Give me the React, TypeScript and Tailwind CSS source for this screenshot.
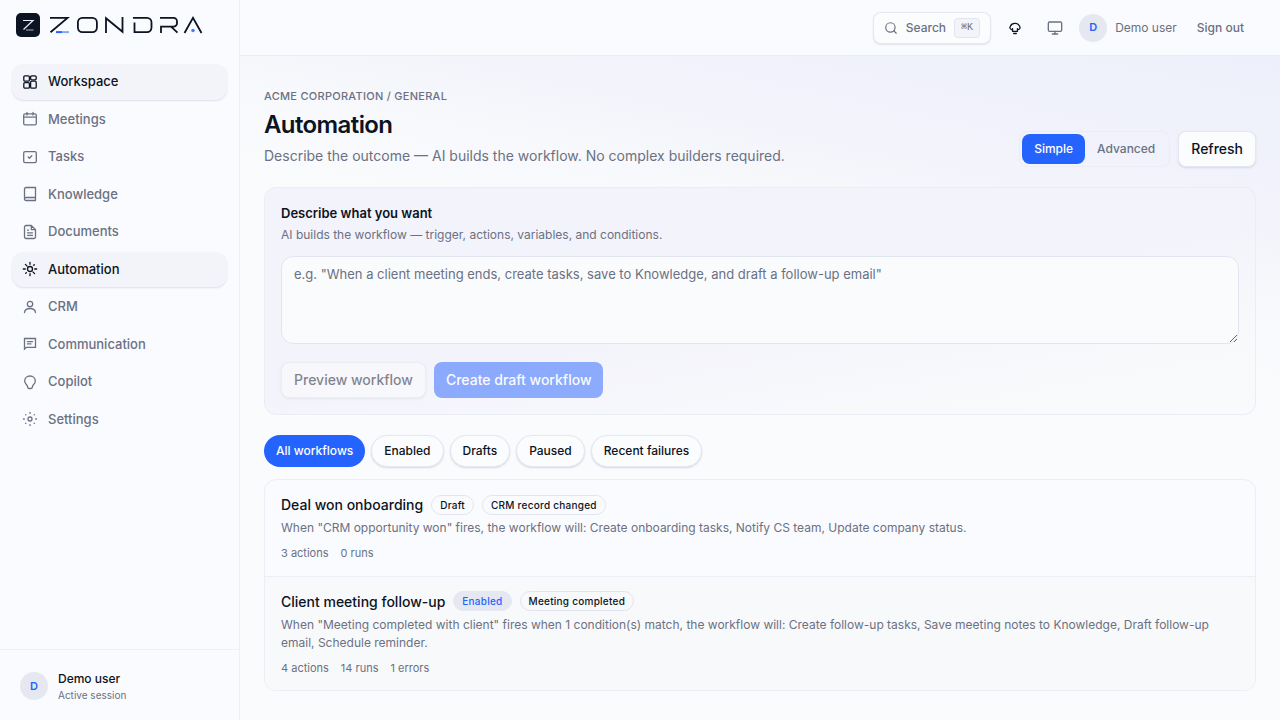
import React from "react";
import { Search, Monitor } from "lucide-react";

type IconProps = { children: React.ReactNode; className?: string };

function Glyph({ children, className = "size-4" }: IconProps) {
  return (
    <svg
      viewBox="0 0 16 16"
      fill="none"
      stroke="currentColor"
      strokeWidth="1.3"
      strokeLinecap="round"
      strokeLinejoin="round"
      className={`shrink-0 ${className}`}
      aria-hidden="true"
    >
      {children}
    </svg>
  );
}

const navItems = [
  {
    label: "Workspace",
    active: true,
    icon: (
      <>
        <rect x="1.8" y="1.8" width="5.6" height="5.4" rx="1.2" />
        <rect x="8.6" y="1.8" width="5.6" height="4" rx="1.2" />
        <rect x="1.8" y="8.6" width="5.6" height="5.6" rx="1.2" />
        <rect x="8.6" y="7.2" width="5.6" height="7" rx="1.2" />
      </>
    ),
  },
  {
    label: "Meetings",
    icon: (
      <>
        <rect x="1.7" y="2.8" width="12.6" height="11" rx="1.4" />
        <path d="M1.7 6.2h12.6M5 1.5v2.6M11 1.5v2.6" />
      </>
    ),
  },
  {
    label: "Tasks",
    icon: (
      <>
        <rect x="1.7" y="2.6" width="12.6" height="11" rx="1.4" />
        <path d="m6.2 8 1.2 1.2 2.4-2.4" />
      </>
    ),
  },
  {
    label: "Knowledge",
    icon: (
      <path d="M2.5 13V3c0-.9.6-1.5 1.5-1.5h9.5v13H4c-.9 0-1.5-.6-1.5-1.5s.6-1.5 1.5-1.5h9.5" />
    ),
  },
  {
    label: "Documents",
    icon: (
      <path d="M9.3 1.5H4c-.8 0-1.5.6-1.5 1.4v10.2c0 .8.7 1.4 1.5 1.4h8c.8 0 1.5-.6 1.5-1.4V5.6zM9.3 1.5v4.1h4.2M5.5 6.2h1M5.5 8.8h5M5.5 11.3h5" />
    ),
  },
  {
    label: "Automation",
    active: true,
    icon: (
      <>
        <circle cx="8" cy="8" r="2.5" />
        <path d="M8 1.3v2M8 12.7v2M1.3 8h2M12.7 8h2M3.4 3.4l1.7 1.7M10.9 10.9l1.7 1.7M12.3 3.7l-.6.6M4.3 11.7l-.6.6" />
      </>
    ),
  },
  {
    label: "CRM",
    icon: (
      <>
        <circle cx="8" cy="5" r="2.7" />
        <path d="M2.5 13.5c.3-2.6 2.5-4 5.500-4s5.200 1.400 5.500 4" />
      </>
    ),
  },
  {
    label: "Communication",
    icon: (
      <path strokeLinejoin="miter" d="M2.5 2.5h11v8.800h-9l-2 1.800zM5.500 5.600h5M5.500 7.900H9" />
    ),
  },
  {
    label: "Copilot",
    icon: (
      <path d="M8 2C5 2 2.7 4.100 2.700 7c0 1.800 1 3 2 4 .6.6.800 1 .8 1.600 0 1.100.6 1.900 1.500 1.900h2c.9 0 1.500-.8 1.500-1.900 0-.6.2-1 .8-1.600 1-1 2-2.200 2-4 0-2.900-2.300-5-5.300-5z" />
    ),
  },
  {
    label: "Settings",
    icon: (
      <>
        <circle cx="8" cy="8" r="2" />
        <path d="M8 1.5v.8M8 13.7v.8M1.5 8h.8M13.7 8h.8M3.6 3.6l.3.3M12.1 12.1l.3.3M12.4 3.6l-.3.3M3.9 12.1l-.3.3" />
      </>
    ),
  },
];

const filters = ["Enabled", "Drafts", "Paused", "Recent failures"];

const workflows = [
  {
    name: "Deal won onboarding",
    status: "Draft",
    trigger: "CRM record changed",
    summary:
      'When "CRM opportunity won" fires, the workflow will: Create onboarding tasks, Notify CS team, Update company status.',
    stats: ["3 actions", "0 runs"],
  },
  {
    name: "Client meeting follow-up",
    status: "Enabled",
    trigger: "Meeting completed",
    summary:
      'When "Meeting completed with client" fires when 1 condition(s) match, the workflow will: Create follow-up tasks, Save meeting notes to Knowledge, Draft follow-up email, Schedule reminder.',
    stats: ["4 actions", "14 runs", "1 errors"],
  },
];

function Logo() {
  return (
    <a href="#" aria-label="Zondra" className="flex items-center gap-2">
      <svg viewBox="0 0 24 24" className="size-6" aria-hidden="true">
        <rect width="24" height="24" rx="5" fill="#0c1322" />
        <path d="M7 7.5h10l-9.5 9" fill="none" stroke="#e8ebf5" strokeWidth="1.2" />
        <path d="M10 17h7.5" stroke="#8f98ad" strokeWidth="1.2" />
      </svg>
      <svg viewBox="0 0 156 24" className="h-6 w-[156px]" fill="none" aria-hidden="true">
        <g stroke="#0c1322" strokeWidth="1.8">
          <path d="M2 4.9h17.5l-17 14.4" />
          <rect x="29.9" y="4.9" width="19" height="14.2" rx="4.5" />
          <path d="M58 20V5.2l16.5 13.600V4" />
          <path d="M86.5 9.5v9.600H99a4.500 4.500 0 0 0 4.500-4.500V9.400A4.500 4.500 0 0 0 99 4.900H85" />
          <path d="M113 20v-6.300h12.500a3.500 3.500 0 0 0 3.500-3.500V8.400a3.500 3.500 0 0 0-3.500-3.500H112M123 13.700l6.500 6" />
          <path d="m136.500 20 8.500-15.200 8.500 15.200" />
        </g>
        <path d="M8 19.1h6" stroke="#2563ff" strokeWidth="2" />
        <path d="M14 19.1h7" stroke="#86a8fb" strokeWidth="2" />
        <circle cx="145" cy="17.5" r="1.8" fill="#4b7dfb" />
      </svg>
    </a>
  );
}

function Avatar() {
  return (
    <span className="flex size-7 shrink-0 items-center justify-center rounded-full bg-[#e5e8f1] text-[11px] font-semibold text-[#2563ff]">
      D
    </span>
  );
}

function Sidebar() {
  return (
    <aside className="flex w-60 shrink-0 flex-col border-r border-[#eef0f6] bg-[#fafbfe]">
      <div className="px-4 pt-[13px]">
        <Logo />
      </div>
      <nav className="mt-[27px] flex flex-1 flex-col gap-0.5 px-3">
        {navItems.map((item) => (
          <a
            key={item.label}
            href="#"
            className={`flex items-center gap-2.5 rounded-xl px-2.5 py-2 text-[13px] leading-normal font-medium ${
              item.active
                ? "bg-[#f3f4f9] text-[#0c1322] shadow-[0_1px_2px_#dcdfeb]"
                : "text-[#6b7182]"
            }`}
          >
            <Glyph>{item.icon}</Glyph>
            {item.label}
          </a>
        ))}
      </nav>
      <div className="flex items-center gap-2.5 border-t border-[#eef0f6] px-5 pt-5 pb-[18px]">
        <Avatar />
        <div>
          <p className="text-xs leading-[18px] font-medium text-[#0c1322]">Demo user</p>
          <p className="text-[10px] leading-[14px] text-[#6b7182]">Active session</p>
        </div>
      </div>
    </aside>
  );
}

function Topbar() {
  return (
    <header className="flex h-14 items-center justify-end gap-2 border-b border-[#eaecf5] bg-[#fafbfe] px-6">
      <button className="flex h-8 items-center gap-2 rounded-lg border border-[#e5e8f1] bg-[#fbfcfe] px-2.5 text-xs font-medium text-[#6b7182] shadow-[0_1px_2px_#dfe2ee]">
        <Search className="size-3.5" />
        Search
        <kbd className="flex h-5 items-center rounded-sm border border-[#e2e5ef] bg-[#f2f4f9] px-1.5 font-['Liberation_Mono',monospace] text-[10px]">
          ⌘K
        </kbd>
      </button>
      <button aria-label="Tips" className="flex size-8 items-center justify-center text-[#0c1322]">
        <Glyph className="size-3.5">
          <path
            strokeWidth="1.5"
            d="M5 10 3.500 9.500A2.600 2.600 0 0 1 2.700 6 5.500 5.500 0 0 1 8 2.700 5.500 5.500 0 0 1 13.300 6a2.600 2.600 0 0 1-.8 3.500L11 10M5.200 8.800v3h5.600v-3M6.500 14.300h3"
          />
        </Glyph>
      </button>
      <button
        aria-label="Display"
        className="flex size-8 items-center justify-center text-[#6b7182]"
      >
        <Monitor className="size-4" />
      </button>
      <Avatar />
      <span className="text-xs text-[#6b7182]">Demo user</span>
      <button className="h-8 px-3 text-xs font-medium text-[#6b7182]">Sign out</button>
    </header>
  );
}

function PageHeader() {
  return (
    <div className="flex items-end justify-between gap-4">
      <div>
        <p className="text-[11px] leading-[17px] font-medium tracking-wide text-[#6b7182] uppercase">
          Acme Corporation / General
        </p>
        <h1 className="mt-1 text-2xl leading-8 font-semibold tracking-tight text-[#0c1322]">
          Automation
        </h1>
        <p className="mt-1 text-sm leading-[22px] text-[#6b7182]">
          Describe the outcome — AI builds the workflow. No complex builders required.
        </p>
      </div>
      <div className="flex gap-2">
        <div className="flex rounded-lg border border-[#ebedf5] p-0.5 text-xs">
          <button className="rounded-lg bg-[#2563ff] px-3 font-medium text-white">Simple</button>
          <button className="px-3 font-medium text-[#6b7182]">Advanced</button>
        </div>
        <button className="h-9 rounded-lg border border-[#e5e8f1] bg-[#fbfcfe] px-3 text-sm font-medium text-[#0c1322] shadow-[0_1px_2px_#d5d8e3]">
          Refresh
        </button>
      </div>
    </div>
  );
}

function PromptCard() {
  return (
    <section className="mt-5 rounded-xl border border-[#ebedf5] bg-[linear-gradient(170deg,#f2f3fb_0%,#f3f3fb_50%,#f8f9fb_80%,#f9fafc_100%)] p-4">
      <label
        htmlFor="prompt"
        className="block text-[13px] leading-[18px] font-semibold text-[#0c1322]"
      >
        Describe what you want
      </label>
      <p className="mt-1 text-xs leading-[18px] text-[#6b7182]">
        AI builds the workflow — trigger, actions, variables, and conditions.
      </p>
      <textarea
        id="prompt"
        placeholder={
          'e.g. "When a client meeting ends, create tasks, save to Knowledge, and draft a follow-up email"'
        }
        className="mt-3 block h-[88px] w-full rounded-xl border border-[#e2e5ef] bg-[#fafbfd] px-3 py-2 text-[13px] leading-[18px] placeholder:text-[#6b7182]"
      />
      <div className="mt-[18px] flex gap-2">
        <button
          disabled
          className="h-9 rounded-lg border border-[#e5e8f1] bg-[#fbfcfe] px-3 text-sm font-medium text-[#0c1322] opacity-50 shadow-[0_1px_2px_#d5d8e3]"
        >
          Preview workflow
        </button>
        <button
          disabled
          className="h-9 rounded-lg bg-[#2563ff] px-3 text-sm font-medium text-white opacity-50"
        >
          Create draft workflow
        </button>
      </div>
    </section>
  );
}

function WorkflowList() {
  return (
    <ul className="mt-3 overflow-hidden rounded-xl border border-[#eceef6] bg-[#fafbfe]">
      {workflows.map((workflow) => (
        <li
          key={workflow.name}
          className="border-b border-[#eceef6] px-4 py-3.5 last:border-b-0 last:bg-[#f8f9fb]"
        >
          <div className="flex items-center gap-2">
            <h2 className="text-sm leading-[21px] font-medium text-[#0c1322]">{workflow.name}</h2>
            <span
              className={`rounded-full border px-2 text-[10px] leading-[18px] font-medium tracking-wide ${
                workflow.status === "Enabled"
                  ? "border-[#e5e8f1] bg-[#e5e8f1] text-[#2563ff]"
                  : "border-[#e2e5ef] text-[#0c1322]"
              }`}
            >
              {workflow.status}
            </span>
            <span className="rounded-full border border-[#e2e5ef] px-2 text-[10px] leading-[18px] font-medium tracking-wide text-[#0c1322]">
              {workflow.trigger}
            </span>
          </div>
          <p className="mt-1 text-xs leading-[18px] text-[#6b7182]">{workflow.summary}</p>
          <div className="mt-2 flex gap-3 text-[11px] leading-normal text-[#6b7182]">
            {workflow.stats.map((stat) => (
              <span key={stat}>{stat}</span>
            ))}
          </div>
        </li>
      ))}
    </ul>
  );
}

export default function App() {
  return (
    <div className="flex min-h-screen bg-[#fbfcfe] font-['Inter',sans-serif]">
      <Sidebar />
      <div className="flex min-w-0 flex-1 flex-col">
        <Topbar />
        <main className="flex-1 bg-[linear-gradient(192deg,#edf0fa_0px,#f1f2fb_130px,#f8f9fc_250px,#fafbfd_360px)] px-6 pt-8 pb-6">
          <PageHeader />
          <PromptCard />
          <div className="mt-5 flex gap-1.5 text-xs font-medium">
            <button className="h-8 rounded-full bg-[#2563ff] px-3 text-white">All workflows</button>
            {filters.map((filter) => (
              <button
                key={filter}
                className="h-8 rounded-full border border-[#e5e8f1] bg-[#fbfcfe] px-3 text-[#0c1322] shadow-[0_1px_2px_#d5d8e3]"
              >
                {filter}
              </button>
            ))}
          </div>
          <WorkflowList />
        </main>
      </div>
    </div>
  );
}
